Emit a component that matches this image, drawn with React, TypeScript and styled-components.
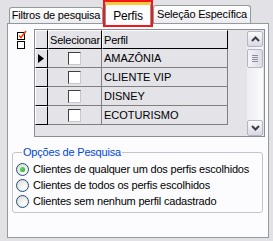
import styled, { createGlobalStyle } from "styled-components";

const GlobalStyle = createGlobalStyle`
  html, body {
    margin: 0;
    padding: 0;
    background: #e2e1e6;
  }
  body {
    font-family: "Liberation Sans", Arial, sans-serif;
    font-size: 11px;
    letter-spacing: -0.2px;
    color: #000;
  }
  * {
    box-sizing: border-box;
  }
`;

const profiles = ["AMAZÔNIA", "CLIENTE VIP", "DISNEY", "ECOTURISMO"];

const options = [
    "Clientes de qualquer um dos perfis escolhidos",
    "Clientes de todos os perfis escolhidos",
    "Clientes sem nenhum perfil cadastrado",
];

export default function App() {
    return (
        <>
            <GlobalStyle />
            <Window>
                <TabStrip>
                    <Tab $width={94} $height={16}>
                        Filtros de pesquisa
                    </Tab>
                    <Highlight>
                        <ActiveTab>Perfis</ActiveTab>
                    </Highlight>
                    <Tab $width={98} $height={18}>
                        Seleção Específica
                    </Tab>
                </TabStrip>

                <Panel>
                    <TopRow>
                        <IconStack>
                            <MiniBox>
                                <svg width="10" height="10" viewBox="0 0 10 10">
                                    <rect x="0.5" y="2.5" width="7" height="7" fill="#fff" stroke="#000" />
                                    <path d="M2 5.5 L4 7.5 L9 1" fill="none" stroke="#ff3c00" strokeWidth="1.6" />
                                </svg>
                            </MiniBox>
                            <MiniBox>
                                <svg width="10" height="10" viewBox="0 0 10 10">
                                    <rect x="0.5" y="1.5" width="7" height="7" fill="#fff" stroke="#000" />
                                </svg>
                            </MiniBox>
                        </IconStack>

                        <Grid>
                            <Table>
                                <HeaderRow>
                                    <HeadCell $width={13} />
                                    <HeadCell $width={54}>Selecionar</HeadCell>
                                    <HeadCell $width={126}>Perfil</HeadCell>
                                </HeaderRow>
                                {profiles.map((name, i) => (
                                    <Row key={name}>
                                        <IndicatorCell>
                                            {i === 0 && (
                                                <svg width="6" height="9" viewBox="0 0 6 9">
                                                    <polygon points="0,0 6,4.5 0,9" fill="#000" />
                                                </svg>
                                            )}
                                        </IndicatorCell>
                                        <CheckCell>
                                            <CheckBox />
                                        </CheckCell>
                                        <TextCell>{name}</TextCell>
                                    </Row>
                                ))}
                            </Table>

                            <ScrollBar>
                                <ScrollButton>
                                    <svg width="9" height="6" viewBox="0 0 9 6">
                                        <path d="M1 5 L4.5 1.5 L8 5" fill="none" stroke="#3c3c48" strokeWidth="2" />
                                    </svg>
                                </ScrollButton>
                                <Thumb>
                                    <Grip />
                                    <Grip />
                                    <Grip />
                                    <Grip />
                                </Thumb>
                                <Track />
                                <ScrollButton>
                                    <svg width="9" height="6" viewBox="0 0 9 6">
                                        <path d="M1 1 L4.5 4.5 L8 1" fill="none" stroke="#3c3c48" strokeWidth="2" />
                                    </svg>
                                </ScrollButton>
                            </ScrollBar>
                        </Grid>
                    </TopRow>

                    <GroupBox>
                        <Legend>Opções de Pesquisa</Legend>
                        {options.map((label, i) => (
                            <RadioRow key={label}>
                                <Radio $checked={i === 0} />
                                {label}
                            </RadioRow>
                        ))}
                    </GroupBox>
                </Panel>
            </Window>
        </>
    );
}

const Window = styled.div`
    width: 273px;
    height: 241px;
    padding: 0 4px 3px 7px;
    display: flex;
    flex-direction: column;
`;

const TabStrip = styled.div`
    display: flex;
    align-items: flex-end;
    height: 23px;
    padding-left: 2px;
    position: relative;
    z-index: 1;
`;

const Tab = styled.div<{ $width: number; $height: number }>`
    width: ${(p) => p.$width}px;
    height: ${(p) => p.$height}px;
    border: 1px solid #919b9c;
    border-bottom: none;
    border-radius: 3px 3px 0 0;
    background: linear-gradient(#ffffff, #ecebf0);
    display: flex;
    align-items: center;
    justify-content: center;
    white-space: nowrap;
    overflow: hidden;
    padding-bottom: 1px;
`;

const Highlight = styled.div`
    width: 50px;
    height: 27px;
    margin-bottom: -4px;
    border: 2px solid #f01818;
    display: flex;
`;

const ActiveTab = styled.div`
    flex: 1;
    background: #fcfcfe;
    border: 1px solid #919b9c;
    border-top: 3px solid #ffc83c;
    border-bottom: none;
    border-radius: 3px 3px 0 0;
    display: flex;
    justify-content: center;
    padding-top: 4px;
    font-size: 12px;
`;

const Panel = styled.div`
    flex: 1;
    background: #fcfcfe;
    border: 1px solid #919b9c;
    display: flex;
    flex-direction: column;
`;

const TopRow = styled.div`
    display: flex;
    gap: 7px;
    padding: 5px 3px 0 9px;
`;

const IconStack = styled.div`
    display: flex;
    flex-direction: column;
    padding-top: 1px;
`;

const MiniBox = styled.div`
    width: 10px;
    height: 10px;
    line-height: 0;
`;

const Grid = styled.div`
    width: 232px;
    height: 108px;
    border: 1px solid #8c8c94;
    background: #e3e3e8;
    display: flex;
    justify-content: space-between;
`;

const Table = styled.div`
    display: flex;
    flex-direction: column;
`;

const HeaderRow = styled.div`
    display: flex;
    height: 19px;
`;

const HeadCell = styled.div<{ $width: number }>`
    width: ${(p) => p.$width}px;
    border-top: 1px solid #fff;
    border-left: 1px solid #fff;
    border-right: 1px solid #000;
    border-bottom: 1px solid #000;
    padding-left: 1px;
    display: flex;
    align-items: center;
    white-space: nowrap;
    overflow: hidden;
`;

const Row = styled.div`
    display: flex;
    height: 19px;
`;

const IndicatorCell = styled.div`
    width: 13px;
    border-top: 1px solid #fff;
    border-left: 1px solid #fff;
    border-right: 1px solid #000;
    border-bottom: 1px solid #000;
    display: flex;
    align-items: center;
    padding-left: 2px;
`;

const CheckCell = styled.div`
    width: 54px;
    border-right: 1px solid #808080;
    border-bottom: 1px solid #808080;
    display: flex;
    align-items: center;
    justify-content: center;
`;

const CheckBox = styled.span`
    width: 13px;
    height: 13px;
    background: #fff;
    border-top: 1px solid #404040;
    border-left: 1px solid #404040;
    border-right: 1px solid #c8c8c8;
    border-bottom: 1px solid #c8c8c8;
`;

const TextCell = styled.div`
    width: 126px;
    border-right: 1px solid #808080;
    border-bottom: 1px solid #808080;
    display: flex;
    align-items: center;
    padding-left: 2px;
    white-space: nowrap;
    letter-spacing: 0;
`;

const ScrollBar = styled.div`
    width: 16px;
    margin: 1px 1px 0 0;
    display: flex;
    flex-direction: column;
    background: linear-gradient(90deg, #eeeef2, #fbfbfd);
`;

const ScrollButton = styled.div`
    height: 16px;
    border: 1px solid #b5b5c3;
    border-radius: 2px;
    background: linear-gradient(#fbfbfd, #d9d9e2);
    display: flex;
    align-items: center;
    justify-content: center;
`;

const Thumb = styled.div`
    height: 19px;
    margin-top: 2px;
    border: 1px solid #b5b5c3;
    border-radius: 2px;
    background: linear-gradient(90deg, #f4f4f8, #dcdce4);
    display: flex;
    flex-direction: column;
    align-items: center;
    justify-content: center;
    gap: 1px;
`;

const Grip = styled.span`
    width: 6px;
    height: 1px;
    background: #8c8c9c;
`;

const Track = styled.div`
    flex: 1;
`;

const GroupBox = styled.fieldset`
    margin: 8px 5px 0 4px;
    padding: 0 0 3px 3px;
    border: 1px solid #c4c4cc;
    border-radius: 3px;
    min-width: 0;
`;

const Legend = styled.legend`
    margin-left: 6px;
    padding: 0 1px;
    line-height: 14px;
    color: #0046d5;
`;

const RadioRow = styled.label`
    display: flex;
    align-items: center;
    gap: 4px;
    height: 16px;
    white-space: nowrap;
    &:first-of-type {
        margin-top: 2px;
    }
`;

const Radio = styled.span<{ $checked: boolean }>`
    width: 13px;
    height: 13px;
    border-radius: 50%;
    border: 1px solid #1c5180;
    background: radial-gradient(circle at 65% 65%, #ffffff 0%, #f0f0ec 40%, #d2d2ca 100%);
    display: flex;
    align-items: center;
    justify-content: center;
    &::after {
        content: "";
        display: ${(p) => (p.$checked ? "block" : "none")};
        width: 5px;
        height: 5px;
        border-radius: 50%;
        background: radial-gradient(circle at 35% 35%, #5ee05e, #21a121);
    }
`;
